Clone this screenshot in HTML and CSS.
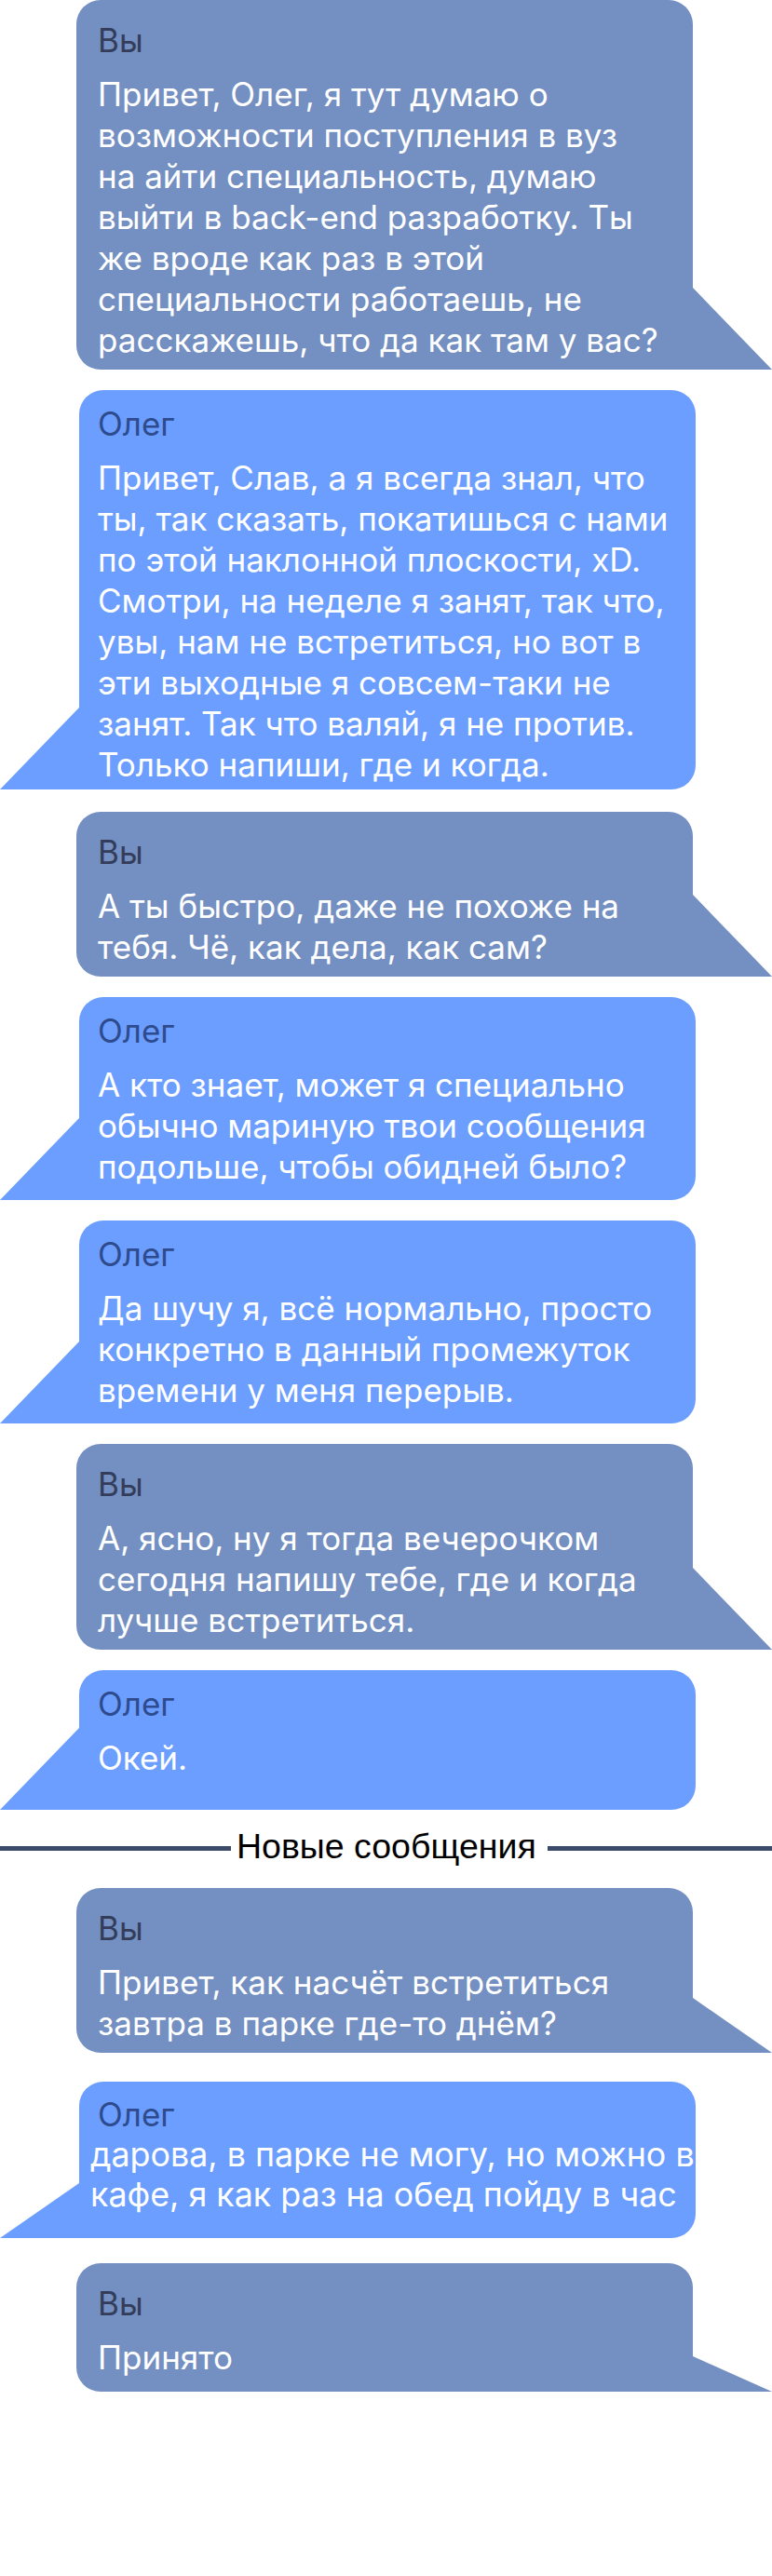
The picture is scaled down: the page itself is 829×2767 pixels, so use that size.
FILE: index.html
```html
<!DOCTYPE html>
<html lang="ru">
<head>
<meta charset="utf-8">
<title>Чат</title>
<link rel="stylesheet" href="styles.css">
</head>
<body>
<main class="chat">
  <div class="msg msg--me">
    <div class="msg__author">Вы</div>
    <p class="msg__text">Привет, Олег, я тут думаю о<br>возможности поступления в вуз<br>на айти специальность, думаю<br>выйти в back-end разработку. Ты<br>же вроде как раз в этой<br>специальности работаешь, не<br>расскажешь, что да как там у вас?</p>
  </div>
  <div class="msg msg--them msg--tight">
    <div class="msg__author">Олег</div>
    <p class="msg__text">Привет, Слав, а я всегда знал, что<br>ты, так сказать, покатишься с нами<br>по этой наклонной плоскости, xD.<br>Смотри, на неделе я занят, так что,<br>увы, нам не встретиться, но вот в<br>эти выходные я совсем-таки не<br>занят. Так что валяй, я не против.<br>Только напиши, где и когда.</p>
  </div>
  <div class="msg msg--me msg--spaced">
    <div class="msg__author">Вы</div>
    <p class="msg__text">А ты быстро, даже не похоже на<br>тебя. Чё, как дела, как сам?</p>
  </div>
  <div class="msg msg--them">
    <div class="msg__author">Олег</div>
    <p class="msg__text">А кто знает, может я специально<br>обычно мариную твои сообщения<br>подольше, чтобы обидней было?</p>
  </div>
  <div class="msg msg--them">
    <div class="msg__author">Олег</div>
    <p class="msg__text">Да шучу я, всё нормально, просто<br>конкретно в данный промежуток<br>времени у меня перерыв.</p>
  </div>
  <div class="msg msg--me">
    <div class="msg__author">Вы</div>
    <p class="msg__text">А, ясно, ну я тогда вечерочком<br>сегодня напишу тебе, где и когда<br>лучше встретиться.</p>
  </div>
  <div class="msg msg--them msg--roomy">
    <div class="msg__author">Олег</div>
    <p class="msg__text">Окей.</p>
  </div>

  <div class="divider">
    <span class="divider__line divider__line--start"></span>
    <span class="divider__label">Новые сообщения</span>
    <span class="divider__line"></span>
  </div>

  <div class="msg msg--me msg--tail-sm msg--after-divider">
    <div class="msg__author">Вы</div>
    <p class="msg__text">Привет, как насчёт встретиться<br>завтра в парке где-то днём?</p>
  </div>
  <div class="msg msg--them msg--raw msg--tail-sm">
    <div class="msg__author">Олег</div>
    <p class="msg__text">дарова, в парке не могу, но можно в<br>кафе, я как раз на обед пойду в час</p>
  </div>
  <div class="msg msg--me msg--tail-xs msg--last">
    <div class="msg__author">Вы</div>
    <p class="msg__text">Принято</p>
  </div>
</main>
</body>
</html>
```

FILE: styles.css
```css
* {
  box-sizing: border-box;
}

html, body {
  margin: 0;
  padding: 0;
  background: #ffffff;
}

body {
  font-family: Inter, "Noto Sans", sans-serif;
  width: 829px;
}

.chat {
  display: flex;
  flex-direction: column;
  gap: 22px;
  padding-bottom: 120px;
}

.msg {
  position: relative;
  width: 662px;
  font-size: 35px;
  line-height: 44px;
  --tail-h: 88px;
}

.msg::after {
  content: "";
  position: absolute;
  bottom: 0;
  width: 85px;
  height: var(--tail-h);
}

.msg--me {
  margin-left: 82px;
  background: #748fc1;
  border-radius: 26px 26px 0 26px;
  padding: 21px 12px 10px 23px;
}

.msg--me::after {
  right: -85px;
  background: #748fc1;
  clip-path: polygon(0 0, 100% 100%, 0 100%);
}

.msg--them {
  margin-left: 85px;
  background: #6b9eff;
  border-radius: 26px 26px 26px 0;
  padding: 14px 12px 14px 20px;
}

.msg--them::after {
  left: -85px;
  background: #6b9eff;
  clip-path: polygon(100% 0, 100% 100%, 0 100%);
}

.msg__author {
  margin: 0;
}

.msg--me .msg__author {
  color: #333d5a;
}

.msg--them .msg__author {
  color: #2e4b8e;
}

.msg__text {
  margin: 14px 0 0;
  color: #ffffff;
  white-space: nowrap;
}

.msg--tight {
  padding-bottom: 5px;
}

.msg--spaced {
  margin-top: 2px;
}

.msg--roomy {
  padding-bottom: 34px;
}

.msg--raw {
  margin-top: 9px;
  padding: 13px 0 25px 20px;
}

.msg--raw .msg__text {
  margin: 0 0 0 -8px;
  font-size: 35.8px;
  line-height: 43px;
}

.msg--tail-sm {
  --tail-h: 59px;
}

.msg--tail-xs {
  --tail-h: 38px;
}

.msg--last {
  margin-top: 5px;
  padding-bottom: 15px;
}

.msg--after-divider {
  margin-top: 3px;
}

.divider {
  display: flex;
  align-items: center;
  margin-top: -3px;
}

.divider__line {
  flex: 1;
  height: 5px;
  background: #3a4a68;
  margin-top: 4px;
}

.divider__line--start {
  flex: 0 0 248px;
}

.divider__label {
  font-family: "Liberation Sans", Arial, sans-serif;
  font-size: 37.5px;
  color: #000000;
  margin: 0 12px 0 6px;
  line-height: 40px;
}
```
